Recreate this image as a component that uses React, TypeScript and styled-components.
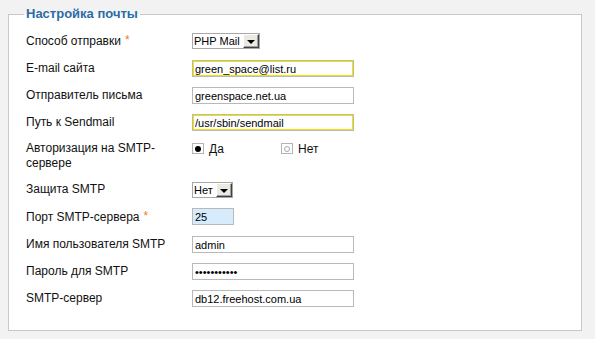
import React from "react";
import styled, { createGlobalStyle } from "styled-components";

const Global = createGlobalStyle`
  html, body { margin: 0; padding: 0; background: #f2f2f2; }
  body { font-family: "Liberation Sans", Arial, sans-serif; }
`;

const Page = styled.div`
  padding: 6px 13px 10px 8px;
`;

const Fieldset = styled.fieldset`
  margin: 0;
  border: 1px solid #c8c8c8;
  background: #fff;
  padding: 10px 0 23px 15px;
  min-width: 0;
`;

const Legend = styled.legend`
  padding: 0 2px;
  font: bold 13px/16px "Liberation Sans", Arial, sans-serif;
  color: #2d6ca5;
`;

const Rows = styled.div`
  display: flex;
  flex-direction: column;
  gap: 10px;
  padding-left: 2px;
`;

const Row = styled.div`
  display: grid;
  grid-template-columns: 166px 1fr;
  align-items: start;
`;

const Label = styled.div<{ $tall?: boolean }>`
  width: 150px;
  font-size: 12px;
  line-height: ${(p) => (p.$tall ? "15px" : "17px")};
  color: #111;
`;

const Req = styled.span`
  color: #f07a1a;
  margin-left: 4px;
  vertical-align: 1px;
`;

const Input = styled.input<{ $w?: number; $hl?: boolean; $bg?: string }>`
  box-sizing: border-box;
  display: block;
  width: ${(p) => p.$w ?? 162}px;
  height: 17px;
  margin: 0;
  padding: 0 2px;
  border: 1px solid #b9b9b9;
  background: ${(p) => p.$bg ?? "#fff"};
  outline: ${(p) => (p.$hl ? "1px solid #f3e400" : "none")};
  outline-offset: -2px;
  font: 11px "Liberation Sans", Arial, sans-serif;
  color: #000;
`;

const SelectBox = styled.div<{ $w: number }>`
  box-sizing: border-box;
  width: ${(p) => p.$w}px;
  height: 16px;
  margin-top: 1px;
  border: 1px solid #a8a8a8;
  background: #fff;
  display: flex;
  align-items: center;
  justify-content: space-between;
  padding: 0 0 0 1px;
  font-size: 11px;
  color: #000;
`;

const SelectBtn = styled.span`
  box-sizing: border-box;
  width: 16px;
  height: 14px;
  background: #ece9e3;
  border-top: 1px solid #fff;
  border-left: 1px solid #fff;
  border-right: 1px solid #404040;
  border-bottom: 1px solid #404040;
  box-shadow: inset -1px -1px 0 #a0a0a0;
  display: flex;
  align-items: center;
  justify-content: center;
  &::after {
    content: "";
    border-left: 4px solid transparent;
    border-right: 4px solid transparent;
    border-top: 4px solid #000;
    margin-top: 1px;
  }
`;

const RadioGroup = styled.div`
  display: flex;
  align-items: center;
  height: 17px;
  margin-top: -1px;
`;

const RadioItem = styled.label<{ $w?: number }>`
  display: flex;
  align-items: center;
  width: ${(p) => p.$w ?? 0}px;
  font-size: 12px;
  color: #111;
`;

const RadioBox = styled.span<{ $on?: boolean }>`
  box-sizing: border-box;
  width: 12px;
  height: 11px;
  border: 1px solid #b4b4b4;
  background: #fff;
  display: flex;
  align-items: center;
  justify-content: center;
  margin-right: 5px;
  &::after {
    content: "";
    box-sizing: border-box;
    width: 6px;
    height: 6px;
    border-radius: 50%;
    background: ${(p) => (p.$on ? "#000" : "#fff")};
    border: ${(p) => (p.$on ? "none" : "1px solid #a8a8a8")};
  }
`;

const Select = ({ value, w }: { value: string; w: number }) => (
  <SelectBox $w={w}>
    <span>{value}</span>
    <SelectBtn />
  </SelectBox>
);

export default function App() {
  return (
    <>
      <Global />
      <Page>
        <Fieldset>
          <Legend>Настройка почты</Legend>
          <Rows>
            <Row>
              <Label>
                Способ отправки<Req>*</Req>
              </Label>
              <Select value="PHP Mail" w={68} />
            </Row>
            <Row>
              <Label>E-mail сайта</Label>
              <Input $hl defaultValue="green_space@list.ru" />
            </Row>
            <Row>
              <Label>Отправитель письма</Label>
              <Input defaultValue="greenspace.net.ua" />
            </Row>
            <Row>
              <Label>Путь к Sendmail</Label>
              <Input $hl defaultValue="/usr/sbin/sendmail" />
            </Row>
            <Row>
              <Label $tall>Авторизация на SMTP-сервере</Label>
              <RadioGroup>
                <RadioItem $w={89}>
                  <RadioBox $on />
                  Да
                </RadioItem>
                <RadioItem $w={60}>
                  <RadioBox />
                  Нет
                </RadioItem>
              </RadioGroup>
            </Row>
            <Row>
              <Label>Защита SMTP</Label>
              <Select value="Нет" w={41} />
            </Row>
            <Row>
              <Label>
                Порт SMTP-сервера<Req>*</Req>
              </Label>
              <Input $w={42} $bg="#d6ebfb" defaultValue="25" />
            </Row>
            <Row>
              <Label>Имя пользователя SMTP</Label>
              <Input defaultValue="admin" />
            </Row>
            <Row>
              <Label>Пароль для SMTP</Label>
              <Input type="password" defaultValue="12345678901" />
            </Row>
            <Row>
              <Label>SMTP-сервер</Label>
              <Input defaultValue="db12.freehost.com.ua" />
            </Row>
          </Rows>
        </Fieldset>
      </Page>
    </>
  );
}
